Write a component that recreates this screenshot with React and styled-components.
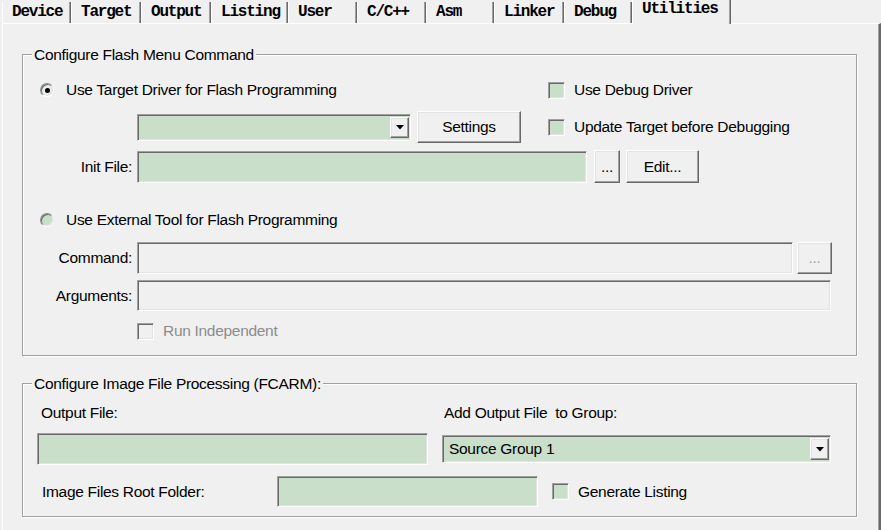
import React from 'react';
import styled, { createGlobalStyle, css } from 'styled-components';

const GlobalStyle = createGlobalStyle`
  * { box-sizing: border-box; }
  html, body { margin: 0; padding: 0; background: #f0f0f0; }
  body {
    font-family: "Liberation Sans", Arial, sans-serif;
    font-size: 15.5px;
    letter-spacing: -0.3px;
    color: #000;
  }
  #root { width: 881px; height: 530px; overflow: hidden; }
`;

const GREEN = '#c9dfca';

const sunken = css`
  border: 1px solid;
  border-color: #a0a0a0 #ffffff #ffffff #a0a0a0;
  box-shadow: inset 1px 1px 0 #696969, inset -1px -1px 0 #e3e3e3;
`;

const raised = css`
  border: 1px solid;
  border-color: #ffffff #696969 #696969 #ffffff;
  box-shadow: inset -1px -1px 0 #a0a0a0, inset 1px 1px 0 #e3e3e3;
  background: #f0f0f0;
`;

const Window = styled.div`
  width: 881px;
  height: 530px;
  display: flex;
  flex-direction: column;
  padding-left: 2px;
  background: #f0f0f0;
`;

const TabStrip = styled.div`
  display: flex;
  align-items: flex-end;
  height: 23px;
  flex: none;
`;

const Tab = styled.div`
  flex: 0 0 ${(p) => p.$w}px;
  height: ${(p) => (p.$active ? 24 : 21)}px;
  margin-bottom: ${(p) => (p.$active ? -1 : 0)}px;
  padding: ${(p) => (p.$active ? 1 : 2)}px 0 0 9px;
  position: relative;
  z-index: ${(p) => (p.$active ? 2 : 1)};
  background: #f0f0f0;
  border-left: 1px solid #ffffff;
  border-right: 1px solid #696969;
  box-shadow: inset -1px 0 0 #a0a0a0;
  font-family: "Liberation Mono", "Courier New", monospace;
  font-weight: bold;
  font-size: 16px;
  letter-spacing: -1.2px;
  line-height: 17px;
  white-space: nowrap;
  color: #000;
`;

const TabPage = styled.div`
  flex: 1;
  border-top: 1px solid #ffffff;
  border-left: 1px solid #ffffff;
  border-right: 2px solid #696969;
  box-shadow: inset -1px 0 0 #a0a0a0;
  padding: 30px 0 0 19px;
`;

const Group = styled.div`
  width: 835px;
  margin-top: ${(p) => p.$mt || 0}px;
  padding-bottom: ${(p) => p.$pb}px;
  border: 1px solid #a0a0a0;
  box-shadow: 1px 1px 0 #ffffff, inset 1px 1px 0 #ffffff;
`;

const Caption = styled.div`
  width: fit-content;
  height: 15px;
  margin: -8px 0 0 9px;
  padding: 0 2px;
  line-height: 15px;
  background: #f0f0f0;
  white-space: nowrap;
`;

const DriverGrid = styled.div`
  display: grid;
  grid-template-columns: 525px 1fr;
  grid-template-rows: 18px 32px;
  row-gap: 12px;
  align-items: center;
  margin-top: 19px;
`;

const Option = styled.div`
  display: flex;
  align-items: center;
  height: 18px;
  line-height: 18px;
  margin-top: ${(p) => p.$mt || 0}px;
  padding-left: ${(p) => p.$indent || 0}px;
  white-space: nowrap;
  color: ${(p) => (p.$disabled ? '#8c8c8c' : '#000')};
`;

const RadioMark = styled.span`
  flex: none;
  width: 14px;
  height: 14px;
  margin-right: 12px;
  border-radius: 50%;
  border: 1px solid;
  border-color: #8a8a8a #f4f4f4 #ffffff #8a8a8a;
  box-shadow: inset 1px 1px 0 #6a6a6a, inset -1px -1px 0 #e3e3e3;
  background: ${GREEN};
  display: grid;
  place-items: center;
  ${(p) =>
    p.$checked &&
    css`
      background: #e8eee8;
      &::after {
        content: '';
        width: 5px;
        height: 5px;
        border-radius: 50%;
        background: #000;
      }
    `}
`;

const CheckMark = styled.span`
  flex: none;
  width: 17px;
  height: 17px;
  margin-right: 9px;
  ${sunken};
  background: ${(p) => (p.$disabled ? '#f0f0f0' : GREEN)};
`;

const ControlRow = styled.div`
  display: flex;
  align-items: center;
  padding-left: ${(p) => p.$indent || 0}px;
  gap: ${(p) => p.$gap || 0}px;
`;

const FieldRow = styled.div`
  display: flex;
  align-items: center;
  margin-top: ${(p) => p.$mt}px;
  padding-left: ${(p) => p.$indent || 0}px;
`;

const FieldLabel = styled.div`
  flex: none;
  width: ${(p) => p.$w || 114}px;
  padding-right: ${(p) => (p.$left ? 0 : 5)}px;
  padding-left: ${(p) => p.$pl || 0}px;
  text-align: ${(p) => (p.$left ? 'left' : 'right')};
  line-height: 18px;
  white-space: nowrap;
`;

const TextBox = styled.div`
  flex: none;
  width: ${(p) => p.$w}px;
  height: ${(p) => p.$h}px;
  ${sunken};
  background: ${(p) => (p.$disabled ? '#f0f0f0' : GREEN)};
`;

const Combo = styled.div`
  flex: none;
  width: ${(p) => p.$w}px;
  height: ${(p) => p.$h}px;
  display: flex;
  align-items: stretch;
  padding: 2px 1px 2px 2px;
  ${sunken};
  background: ${GREEN};
`;

const ComboValue = styled.span`
  flex: 1;
  padding-left: 4px;
  display: flex;
  align-items: center;
  white-space: nowrap;
`;

const ComboArrow = styled.span`
  flex: 0 0 19px;
  ${raised};
  display: grid;
  place-items: center;
`;

const Button = styled.button`
  flex: none;
  width: ${(p) => p.$w}px;
  height: ${(p) => p.$h}px;
  margin-left: ${(p) => p.$ml || 0}px;
  padding: 0;
  font: inherit;
  letter-spacing: inherit;
  display: flex;
  align-items: center;
  justify-content: center;
  color: ${(p) => (p.$disabled ? '#a0a0a0' : '#000')};
  ${raised};
`;

const OutputGrid = styled.div`
  display: grid;
  grid-template-columns: 391px 389px;
  column-gap: 14px;
  align-items: center;
  margin-top: ${(p) => p.$mt}px;
  padding-left: 14px;
`;

const GridLabel = styled.div`
  padding-left: ${(p) => p.$pl}px;
  line-height: 18px;
  white-space: nowrap;
`;

const Arrow = () => (
  <svg width="8" height="5" viewBox="0 0 8 5">
    <polygon points="0,0 8,0 4,4.5" fill="#000" />
  </svg>
);

const tabs = [
  { label: 'Device', w: 69 },
  { label: 'Target', w: 70 },
  { label: 'Output', w: 70 },
  { label: 'Listing', w: 77 },
  { label: 'User', w: 69 },
  { label: 'C/C++', w: 69 },
  { label: 'Asm', w: 68 },
  { label: 'Linker', w: 70 },
  { label: 'Debug', w: 68 },
  { label: 'Utilities', w: 99, active: true },
];

export default function App() {
  return (
    <>
      <GlobalStyle />
      <Window>
        <TabStrip>
          {tabs.map((t) => (
            <Tab key={t.label} $w={t.w} $active={t.active}>
              {t.label}
            </Tab>
          ))}
        </TabStrip>
        <TabPage>
          <Group $pb={15}>
            <Caption>Configure Flash Menu Command</Caption>
            <DriverGrid>
              <Option $indent={17}>
                <RadioMark $checked />
                Use Target Driver for Flash Programming
              </Option>
              <Option>
                <CheckMark />
                Use Debug Driver
              </Option>
              <ControlRow $indent={114} $gap={6}>
                <Combo $w={274} $h={27}>
                  <ComboValue />
                  <ComboArrow>
                    <Arrow />
                  </ComboArrow>
                </Combo>
                <Button $w={104} $h={32}>Settings</Button>
              </ControlRow>
              <Option>
                <CheckMark />
                Update Target before Debugging
              </Option>
            </DriverGrid>

            <FieldRow $mt={7}>
              <FieldLabel>Init File:</FieldLabel>
              <TextBox $w={450} $h={32} />
              <Button $w={26} $h={33} $ml={7}>...</Button>
              <Button $w={73} $h={33} $ml={6}>Edit...</Button>
            </FieldRow>

            <Option $indent={17} $mt={28}>
              <RadioMark />
              Use External Tool for Flash Programming
            </Option>

            <FieldRow $mt={13}>
              <FieldLabel>Command:</FieldLabel>
              <TextBox $w={656} $h={32} $disabled />
              <Button $w={35} $h={32} $ml={4} $disabled>...</Button>
            </FieldRow>

            <FieldRow $mt={6}>
              <FieldLabel>Arguments:</FieldLabel>
              <TextBox $w={694} $h={31} $disabled />
            </FieldRow>

            <Option $indent={114} $mt={11} $disabled>
              <CheckMark $disabled />
              Run Independent
            </Option>
          </Group>

          <Group $mt={27} $pb={9}>
            <Caption>Configure Image File Processing (FCARM):</Caption>
            <OutputGrid $mt={13}>
              <GridLabel $pl={4}>Output File:</GridLabel>
              <GridLabel $pl={2}>Add Output File&nbsp; to Group:</GridLabel>
            </OutputGrid>
            <OutputGrid $mt={11}>
              <TextBox $w={391} $h={32} />
              <Combo $w={389} $h={28}>
                <ComboValue>Source Group 1</ComboValue>
                <ComboArrow>
                  <Arrow />
                </ComboArrow>
              </Combo>
            </OutputGrid>
            <FieldRow $mt={11} $indent={14}>
              <FieldLabel $left $w={240} $pl={5}>
                Image Files Root Folder:
              </FieldLabel>
              <TextBox $w={261} $h={31} />
              <Option $indent={14}>
                <CheckMark />
                Generate Listing
              </Option>
            </FieldRow>
          </Group>
        </TabPage>
      </Window>
    </>
  );
}
